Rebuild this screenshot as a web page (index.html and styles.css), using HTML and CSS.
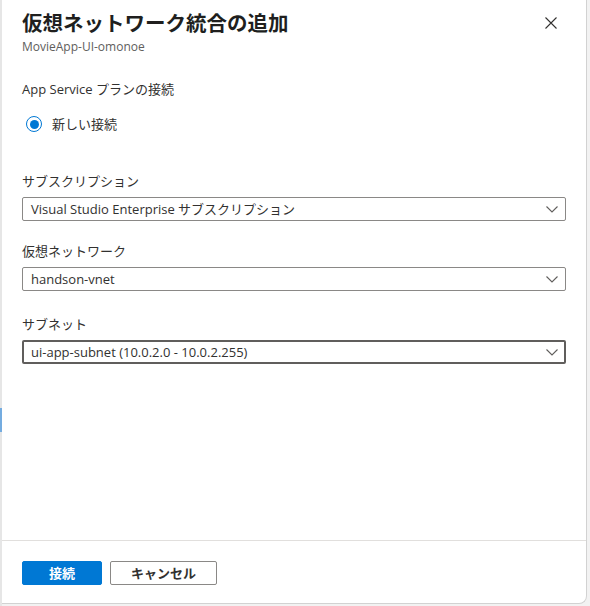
FILE: index.html
```html
<!DOCTYPE html>
<html lang="ja">
<head>
<meta charset="utf-8">
<title>仮想ネットワーク統合の追加</title>
<link rel="stylesheet" href="styles.css">
</head>
<body>
<div class="rail"><div class="rail-mark"></div></div>
<div class="panel">
  <div class="header">
    <div class="titles">
      <h1 class="title">仮想ネットワーク統合の追加</h1>
      <div class="subtitle">MovieApp-UI-omonoe</div>
    </div>
    <button class="close" aria-label="閉じる">
      <svg width="12" height="12" viewBox="0 0 12 12"><path d="M0.5 0.5 L11.5 11.5 M11.5 0.5 L0.5 11.5" stroke="#323130" stroke-width="1.1" fill="none"/></svg>
    </button>
  </div>
  <div class="content">
    <div class="section-label">App Service プランの接続</div>
    <label class="radio-row">
      <span class="radio"><span class="radio-dot"></span></span>
      <span class="radio-text">新しい接続</span>
    </label>

    <div class="field first">
      <div class="field-label">サブスクリプション</div>
      <div class="dropdown">
        <span class="dropdown-text">Visual Studio Enterprise サブスクリプション</span>
        <svg class="chev" width="12" height="7" viewBox="0 0 12 7"><path d="M0.5 0.5 L6 6 L11.5 0.5" stroke="#605e5c" stroke-width="1.1" fill="none"/></svg>
      </div>
    </div>
    <div class="field">
      <div class="field-label">仮想ネットワーク</div>
      <div class="dropdown">
        <span class="dropdown-text">handson-vnet</span>
        <svg class="chev" width="12" height="7" viewBox="0 0 12 7"><path d="M0.5 0.5 L6 6 L11.5 0.5" stroke="#605e5c" stroke-width="1.1" fill="none"/></svg>
      </div>
    </div>
    <div class="field third">
      <div class="field-label">サブネット</div>
      <div class="dropdown focused">
        <span class="dropdown-text">ui-app-subnet (10.0.2.0 - 10.0.2.255)</span>
        <svg class="chev" width="12" height="7" viewBox="0 0 12 7"><path d="M0.5 0.5 L6 6 L11.5 0.5" stroke="#605e5c" stroke-width="1.1" fill="none"/></svg>
      </div>
    </div>
  </div>
  <div class="footer">
    <button class="btn primary">接続</button>
    <button class="btn secondary">キャンセル</button>
  </div>
</div>
</body>
</html>
```
FILE: styles.css
```css
html, body {
  margin: 0;
  padding: 0;
}
body {
  width: 590px;
  height: 606px;
  background: #f2f2f2;
  display: flex;
  align-items: flex-start;
  font-family: "Segoe UI", "Open Sans", "Noto Sans CJK JP", sans-serif;
  color: #323130;
  overflow: hidden;
}
.rail {
  width: 2px;
  height: 606px;
  background: #e6e6e6;
  flex: none;
}
.rail-mark {
  margin-top: 408px;
  height: 24px;
  background: #74ace0;
}
.panel {
  width: 585px;
  height: 604px;
  box-sizing: border-box;
  background: #ffffff;
  border-right: 1px solid #d2d2d2;
  border-bottom: 1px solid #d2d2d2;
  border-bottom-right-radius: 8px;
  display: flex;
  flex-direction: column;
  flex: none;
}
.header {
  display: flex;
  justify-content: space-between;
  align-items: flex-start;
  padding: 6px 29px 0 20px;
}
.title {
  margin: 0;
  font-size: 20.5px;
  line-height: 32px;
  font-weight: 700;
  color: #201f1e;
  font-family: "Noto Sans CJK JP", sans-serif;
}
.subtitle {
  margin-top: 1px;
  font-size: 12px;
  line-height: 16px;
  color: #605e5c;
}
.close {
  margin-top: 11px;
  padding: 0;
  border: 0;
  background: transparent;
  width: 12px;
  height: 12px;
  display: block;
}
.close svg { display: block; }
.content {
  flex: 1;
  padding: 0 20px;
}
.section-label {
  margin-top: 25px;
  font-size: 13px;
  line-height: 18px;
}
.radio-row {
  margin-top: 16px;
  height: 20px;
  display: flex;
  align-items: center;
  padding-left: 4px;
}
.radio {
  width: 16px;
  height: 16px;
  box-sizing: border-box;
  border: 1.5px solid #0078d4;
  border-radius: 50%;
  display: flex;
  align-items: center;
  justify-content: center;
}
.radio-dot {
  width: 9px;
  height: 9px;
  border-radius: 50%;
  background: #0078d4;
}
.radio-text {
  margin-left: 10px;
  font-size: 13px;
  line-height: 18px;
}
.field { margin-top: 21px; }
.field.first { margin-top: 38px; }
.field.third { margin-top: 24px; }
.field-label {
  font-size: 13px;
  line-height: 18px;
}
.dropdown {
  margin-top: 7px;
  height: 24px;
  box-sizing: border-box;
  border: 1px solid #8a8886;
  border-radius: 2px;
  display: flex;
  align-items: center;
  justify-content: space-between;
  padding: 0 7px 0 8px;
  font-size: 13px;
}
.dropdown.focused {
  border: 2px solid #605e5c;
  padding: 0 6px 0 7px;
}
.dropdown-text {
  line-height: 18px;
  white-space: nowrap;
}
.chev { display: block; }
.footer {
  height: 63px;
  box-sizing: border-box;
  border-top: 1px solid #e1dfdd;
  padding: 20px 20px 0 20px;
  display: flex;
  align-items: flex-start;
}
.btn {
  height: 24px;
  box-sizing: border-box;
  border-radius: 2px;
  font-family: "Segoe UI", "Open Sans", "Noto Sans CJK JP", sans-serif;
  font-size: 13px;
  font-weight: 700;
  padding: 0;
  line-height: 20px;
}
.btn.primary {
  width: 80px;
  background: #0078d4;
  border: 1px solid #0078d4;
  color: #ffffff;
}
.btn.secondary {
  width: 107px;
  margin-left: 8px;
  background: #ffffff;
  border: 1px solid #8a8886;
  color: #323130;
}
```
